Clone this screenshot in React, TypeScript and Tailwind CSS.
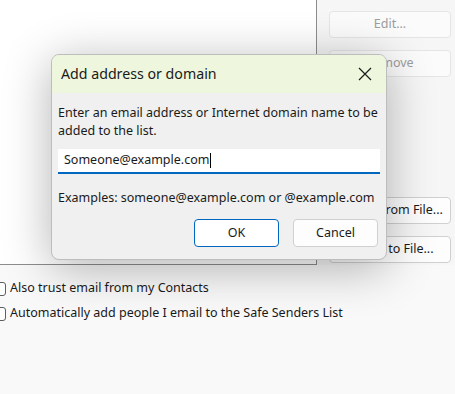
export default function App() {
  return (
    <div
      className="relative h-[394px] w-[455px] overflow-hidden bg-[#f9f9f9] text-[#1a1a1a]"
      style={{ fontFamily: '"Noto Sans", "Open Sans", sans-serif' }}
    >
      <div className="flex h-[265px]">
        <div className="h-[265px] w-[317px] border-r border-b border-[#8d8d8d] bg-white" />
        <div className="flex flex-1 flex-col bg-[#f6f6f6] pl-[12px] pr-[4px] pt-[11px]">
          <button className="h-[27px] w-[122px] rounded-[4px] border border-[#e5e5e5] bg-[#fbfbfb] text-[12.5px] text-[#9d9d9d]">
            Edit...
          </button>
          <button className="mt-[12px] h-[27px] w-[122px] rounded-[4px] border border-[#e5e5e5] bg-[#fbfbfb] text-[12.5px] text-[#9d9d9d]">
            Remove
          </button>
          <button className="mt-[120px] h-[27px] w-[122px] rounded-[4px] border border-[#d0d0d0] bg-[#fdfdfd] text-[12.5px] text-[#1a1a1a]">
            Import from File...
          </button>
          <button className="mt-[12px] h-[27px] w-[122px] rounded-[4px] border border-[#d0d0d0] bg-[#fdfdfd] text-[12.5px] text-[#1a1a1a]">
            Export to File...
          </button>
        </div>
      </div>

      <div className="ml-[-8px] mt-[16px] flex flex-col gap-[10px] text-[12.5px]">
        <label className="flex h-[15px] items-center gap-[4px]">
          <span className="h-[14px] w-[14px] rounded-[3px] border border-[#5f5f5f] bg-white" />
          <span>Also trust email from my Contacts</span>
        </label>
        <label className="flex h-[15px] items-center gap-[4px]">
          <span className="h-[14px] w-[14px] rounded-[3px] border border-[#5f5f5f] bg-white" />
          <span>Automatically add people I email to the Safe Senders List</span>
        </label>
      </div>

      <div className="absolute left-[51px] top-[54px] flex h-[206px] w-[336px] flex-col overflow-hidden rounded-[8px] border border-[#bdbdbd] bg-[#f0f0f0] shadow-[0_8px_48px_rgba(0,0,0,0.3)]">
        <div className="flex h-[38px] shrink-0 items-center justify-between bg-[#eef6dd] pl-[9px] pr-[14px]">
          <span className="text-[14.2px]">Add address or domain</span>
          <svg width="14" height="14" viewBox="0 0 14 14" className="text-[#1a1a1a]">
            <path d="M1 1 L13 13 M13 1 L1 13" stroke="currentColor" strokeWidth="1.2" />
          </svg>
        </div>
        <div className="flex flex-1 flex-col px-[6px] pt-[11px] text-[12.5px]">
          <p className="leading-[18px]">
            Enter an email address or Internet domain name to be added to the list.
          </p>
          <div className="mt-[9px] flex h-[25px] w-[322px] items-center border-b-2 border-[#0067c0] bg-white pl-[6px] text-[12.5px]">
            <span>Someone@example.com</span>
            <span className="ml-[1px] h-[15px] w-[1px] bg-black" />
          </div>
          <p className="mt-[15px] leading-[18px]">Examples: someone@example.com or @example.com</p>
          <div className="mt-[12px] flex justify-end gap-[14px] pr-[2px]">
            <button className="h-[28px] w-[85px] rounded-[4px] border border-[#0067c0] bg-white text-[12.5px]">
              OK
            </button>
            <button className="h-[28px] w-[85px] rounded-[4px] border border-[#d0d0d0] bg-[#fdfdfd] text-[12.5px]">
              Cancel
            </button>
          </div>
        </div>
      </div>
    </div>
  );
}
